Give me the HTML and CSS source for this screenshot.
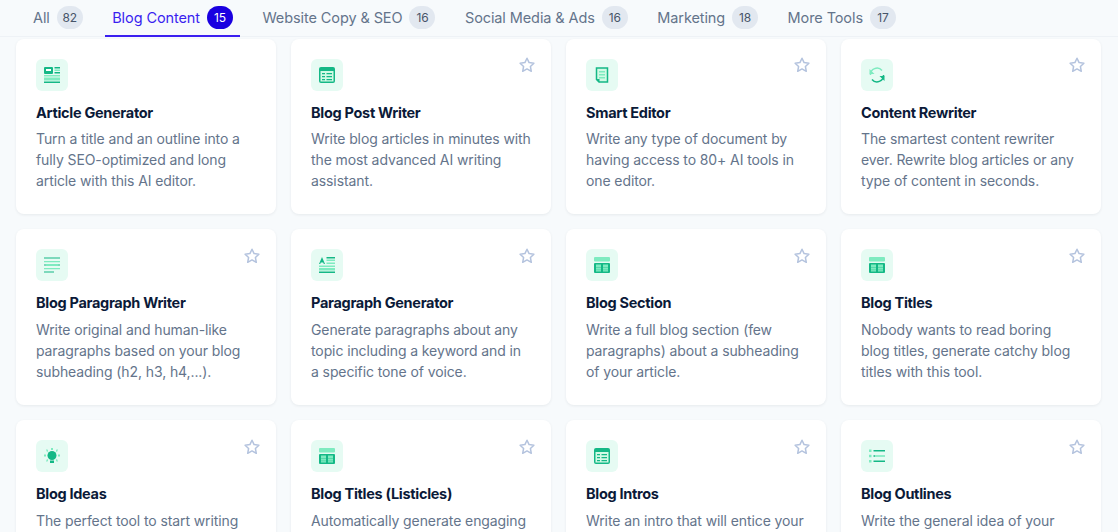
FILE: index.html
```html
<!DOCTYPE html>
<html lang="en">
<head>
    <meta charset="UTF-8">
    <meta name="viewport" content="width=device-width, initial-scale=1.0">
    <title>Templates</title>
    <link rel="stylesheet" href="styles.css">
</head>
<body>

    <!-- icon sheet -->
    <svg class="icon-sheet" width="0" height="0">
        <symbol id="i-star" viewBox="0 0 16 16"><path d="M8 1.200l2.100 4.400 4.800.6-3.500 3.300.9 4.800L8 11.900l-4.300 2.400.9-4.800L1.100 6.200l4.800-.6z"/></symbol>
        <symbol id="i-article" viewBox="0 0 16 16">
            <rect class="dark" x="0" y="0" width="9" height="7" rx="1"/><rect class="white" x="2" y="2" width="5" height="2"/>
            <path class="dark" d="M10.500 0H16V1.500H10.500zM10.500 5H16V6.500H10.500zM0 14.500H16V16H0z"/>
            <path class="light" d="M10.500 2.500H16V4H10.500zM0 8H16V9.500H0zM0 10.500H16V13.500H0z"/>
        </symbol>
        <symbol id="i-table" viewBox="0 0 16 16">
            <rect class="dark" x="0" y="0" width="16" height="16" rx="2"/><rect class="pale" x="1.500" y="4" width="13" height="10.500"/>
            <path class="dark" d="M3 6H6V7.200H3zM7.500 6H13V7.200H7.500zM3 9H6V10.200H3zM7.500 9H13V10.200H7.500zM3 12H6V13.200H3zM7.500 12H13V13.200H7.500z"/>
        </symbol>
        <symbol id="i-doc" viewBox="0 0 16 16">
            <path class="outline" d="M2.500 1H13.500V15H5L2.500 12.500z"/>
            <path class="light" d="M5 4H11V5.500H5zM5 7H11V8.500H5zM5 10H11V11.500H5z"/>
            <path class="dark" d="M2 12H5.500V15.500z"/>
        </symbol>
        <symbol id="i-refresh" viewBox="0 0 16 16">
            <path class="line-light" d="M1.500 8A6.500 6.500 0 0 1 13 3.500"/>
            <path class="line-dark" d="M14.500 8A6.500 6.500 0 0 1 3 12.500"/>
            <path class="light" d="M.5 2L5.500 7H.5z"/><path class="dark" d="M15.500 14L10.500 9H15.500z"/>
        </symbol>
        <symbol id="i-lines" viewBox="0 0 16 16">
            <path class="dark" d="M0 .5H16V1.500H0zM0 7.500H16V8.500H0zM0 14.500H10V15.500H0z"/>
            <path class="light" d="M0 4H16V5.200H0zM0 11H16V12.200H0zM2 7H14V9H2z"/>
        </symbol>
        <symbol id="i-para" viewBox="0 0 16 16">
            <path class="dark" d="M3 0L6 7H4.800L4.200 5.500H1.800L1.200 7H0zM7.500 0H16V1.500H7.500zM0 14.500H16V16H0z"/>
            <path class="light" d="M7.500 2.500H16V4H7.500zM7.500 5.500H16V7H7.500zM0 8.500H16V10H0zM0 11H16V13.500H0z"/>
        </symbol>
        <symbol id="i-section" viewBox="0 0 16 16">
            <rect class="light" x="0" y="0" width="16" height="4.500" rx="1"/>
            <rect class="dark" x="0" y="6" width="16" height="10" rx="1"/>
            <path class="light" d="M2 7.500H7V14.500H2zM9 7.500H14V14.500H9z"/>
            <path class="dark-soft" d="M2 10H14V10.800H2zM2 12.500H14V13.300H2z"/>
        </symbol>
        <symbol id="i-bulb" viewBox="0 0 16 16">
            <circle class="dark" cx="8" cy="7.500" r="4.500"/><rect class="dark" x="6" y="12.500" width="4" height="2.500"/>
            <path class="light" d="M7 0H9V2H7zM0 6.500H2V8.500H0zM14 6.500H16V8.500H14zM2 1.500L3.500 1.500L4.200 3.300L3 4zM14 1.500L12.500 1.500L11.800 3.300L13 4zM2 13.500L3.500 13.500L4.200 11.700L3 11zM14 13.500L12.500 13.500L11.800 11.700L13 11z"/>
        </symbol>
        <symbol id="i-list" viewBox="0 0 16 16">
            <path class="light" d="M0 1.500H2.500V4H0zM0 6.700H2.500V9.200H0zM0 12H2.500V14.500H0z"/>
            <path class="dark" d="M4.500 2H16V3.500H4.500zM4.500 7.200H6V8.800H4.500zM4.500 12.500H16V14H4.500z"/>
            <path class="light" d="M6 7.200H16V8.800H6z"/>
        </symbol>
    </svg>

    <nav class="tabs">
        <a class="tab">All <span class="count">82</span></a>
        <a class="tab active">Blog Content <span class="count">15</span></a>
        <a class="tab">Website Copy &amp; SEO <span class="count">16</span></a>
        <a class="tab">Social Media &amp; Ads <span class="count">16</span></a>
        <a class="tab">Marketing <span class="count">18</span></a>
        <a class="tab">More Tools <span class="count">17</span></a>
    </nav>

    <main class="grid">
        <div class="card">
            <div class="icon"><svg class="icon-art"><use href="#i-article"/></svg></div>
            <h3>Article Generator</h3>
            <p>Turn a title and an outline into a fully SEO-optimized and long article with this AI editor.</p>
        </div>
        <div class="card">
            <svg class="star"><use href="#i-star"/></svg>
            <div class="icon"><svg class="icon-art"><use href="#i-table"/></svg></div>
            <h3>Blog Post Writer</h3>
            <p>Write blog articles in minutes with the most advanced AI writing assistant.</p>
        </div>
        <div class="card">
            <svg class="star"><use href="#i-star"/></svg>
            <div class="icon"><svg class="icon-art"><use href="#i-doc"/></svg></div>
            <h3>Smart Editor</h3>
            <p>Write any type of document by having access to 80+ AI tools in one editor.</p>
        </div>
        <div class="card">
            <svg class="star"><use href="#i-star"/></svg>
            <div class="icon"><svg class="icon-art"><use href="#i-refresh"/></svg></div>
            <h3>Content Rewriter</h3>
            <p>The smartest content rewriter ever. Rewrite blog articles or any type of content in seconds.</p>
        </div>

        <div class="card">
            <svg class="star"><use href="#i-star"/></svg>
            <div class="icon"><svg class="icon-art"><use href="#i-lines"/></svg></div>
            <h3>Blog Paragraph Writer</h3>
            <p>Write original and human-like paragraphs based on your blog subheading (h2, h3, h4,...).</p>
        </div>
        <div class="card">
            <svg class="star"><use href="#i-star"/></svg>
            <div class="icon"><svg class="icon-art"><use href="#i-para"/></svg></div>
            <h3>Paragraph Generator</h3>
            <p>Generate paragraphs about any topic including a keyword and in a specific tone of voice.</p>
        </div>
        <div class="card">
            <svg class="star"><use href="#i-star"/></svg>
            <div class="icon"><svg class="icon-art"><use href="#i-section"/></svg></div>
            <h3>Blog Section</h3>
            <p>Write a full blog section (few paragraphs) about a subheading of your article.</p>
        </div>
        <div class="card">
            <svg class="star"><use href="#i-star"/></svg>
            <div class="icon"><svg class="icon-art"><use href="#i-section"/></svg></div>
            <h3>Blog Titles</h3>
            <p>Nobody wants to read boring blog titles, generate catchy blog titles with this tool.</p>
        </div>

        <div class="card">
            <svg class="star"><use href="#i-star"/></svg>
            <div class="icon"><svg class="icon-art"><use href="#i-bulb"/></svg></div>
            <h3>Blog Ideas</h3>
            <p>The perfect tool to start writing</p>
        </div>
        <div class="card">
            <svg class="star"><use href="#i-star"/></svg>
            <div class="icon"><svg class="icon-art"><use href="#i-section"/></svg></div>
            <h3>Blog Titles (Listicles)</h3>
            <p>Automatically generate engaging</p>
        </div>
        <div class="card">
            <svg class="star"><use href="#i-star"/></svg>
            <div class="icon"><svg class="icon-art"><use href="#i-table"/></svg></div>
            <h3>Blog Intros</h3>
            <p>Write an intro that will entice your</p>
        </div>
        <div class="card">
            <svg class="star"><use href="#i-star"/></svg>
            <div class="icon"><svg class="icon-art"><use href="#i-list"/></svg></div>
            <h3>Blog Outlines</h3>
            <p>Write the general idea of your</p>
        </div>
    </main>

</body>
</html>
```

FILE: styles.css
```css
html, body {
    margin: 0;
    height: 532px;
    overflow: hidden;
}
body {
    font-family: "Inter", "Open Sans", sans-serif;
    background: #f7fafc;
    color: #64748b;
}
.icon-sheet {
    position: absolute;
}

.tabs {
    display: flex;
    gap: 15.5px;
    height: 37px;
    padding-left: 26px;
    box-sizing: border-box;
    border-bottom: 1px solid #eef2f6;
}
.tab {
    display: flex;
    align-items: flex-start;
    gap: 7px;
    height: 37px;
    box-sizing: border-box;
    padding: 6px 7px 0;
    font-size: 14.5px;
    line-height: 23px;
    color: #64748b;
    letter-spacing: -0.1px;
}
.tab.active {
    color: #3a1ff0;
    border-bottom: 2px solid #3a1ff0;
}
.count {
    width: 26px;
    height: 23px;
    border-radius: 12px;
    background: #e2e8f0;
    color: #475569;
    font-size: 12px;
    text-align: center;
}
.active .count {
    background: #1a00e0;
    color: #fff;
}

.grid {
    display: grid;
    grid-template-columns: repeat(4, 260px);
    grid-auto-rows: 175.6px;
    gap: 15px;
    padding: 1.8px 0 0 16px;
}
.card {
    position: relative;
    box-sizing: border-box;
    padding: 20px;
    background: #fff;
    border-radius: 8px;
    box-shadow: 0 1px 3px rgba(15, 23, 42, 0.07);
}
.star {
    position: absolute;
    top: 18.6px;
    right: 16px;
    width: 16px;
    height: 16px;
    fill: none;
    stroke: #b4c3de;
    stroke-width: 1.5;
    stroke-linejoin: round;
}
.icon {
    display: flex;
    align-items: center;
    justify-content: center;
    width: 32px;
    height: 32px;
    border-radius: 6px;
    background: #e6fbf3;
}
.icon-art {
    width: 16px;
    height: 16px;
}
.dark { fill: #14b886; }
.dark-soft { fill: #14b886; opacity: 0.5; }
.light { fill: #7eebc0; }
.pale { fill: #d1fae5; }
.white { fill: #fff; }
.outline { fill: #d1fae5; stroke: #14b886; stroke-width: 1.5; }
.line-dark { fill: none; stroke: #14b886; stroke-width: 1.5; }
.line-light { fill: none; stroke: #7eebc0; stroke-width: 1.5; }

.card h3 {
    margin: 13px 0 0;
    font-size: 14.5px;
    line-height: 18px;
    font-weight: 700;
    color: #0b1a38;
    letter-spacing: -0.3px;
}
.card p {
    margin: 6.6px 0 0;
    font-size: 14px;
    line-height: 21px;
    letter-spacing: -0.1px;
}
```
